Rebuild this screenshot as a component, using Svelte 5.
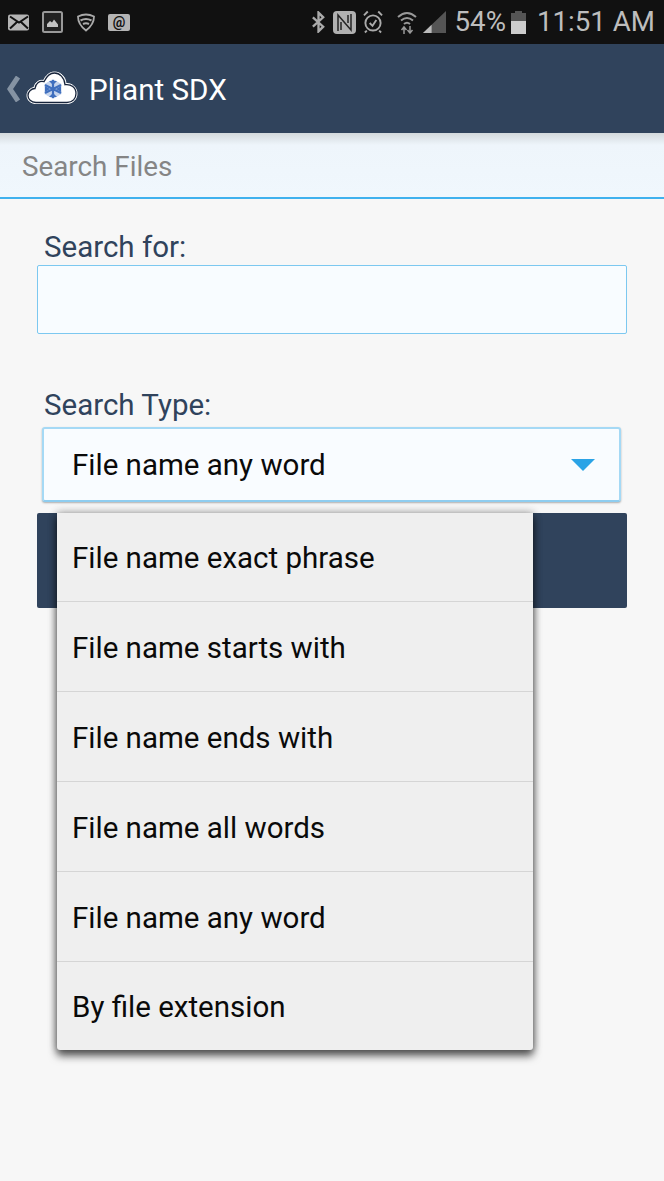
<script>
	let options = [
		'File name exact phrase',
		'File name starts with',
		'File name ends with',
		'File name all words',
		'File name any word',
		'By file extension'
	];
	let selected = 'File name any word';
	let query = '';
</script>

<main>
	<div class="status">
		<div class="status-left">
			<svg width="22" height="17" viewBox="0 0 22 17"><rect width="21" height="16" y="0.5" rx="2" fill="#b4b4b4"/><path d="M2 2.500l9 6 9-6M2 14.500l7-6.500M20 14.500l-7-6.500" fill="none" stroke="#111" stroke-width="2"/></svg>
			<svg width="21" height="22" viewBox="0 0 21 22"><rect x="1" y="1" width="19" height="20" rx="1.500" fill="#222" stroke="#999" stroke-width="2"/><path d="M5 16v-3l3-3 2 1.500 2-3 4 5v2.500z" fill="#c4c4c4"/></svg>
			<svg class="shield" width="18" height="19" viewBox="0 0 18 19"><path d="M1 3.500q8-4 16 0q0 8-8 14q-8-6-8-14z" fill="none" stroke="#aaa" stroke-width="1.800"/><path d="M3.500 7.500q5.500-3 11 0M6 11q3-1.500 6 0" fill="none" stroke="#aaa" stroke-width="2"/></svg>
			<div class="at">@</div>
		</div>
		<div class="status-right">
			<svg class="bt" width="15" height="22" viewBox="0 0 16 22"><path d="M2 6l11 10-5 5V1l5 5L2 16" fill="none" stroke="#aaa" stroke-width="2.500"/></svg>
			<svg class="nfc" width="23" height="23" viewBox="0 0 23 23"><rect width="23" height="23" rx="4" fill="#b0b0b0"/><path d="M5 20V4l13 15V3" fill="none" stroke="#222" stroke-width="1.500"/><path d="M8 11v8M15 4v8" fill="none" stroke="#222" stroke-width="1.500"/></svg>
			<svg class="alarm" width="20" height="24" viewBox="0 0 21 24"><circle cx="10.500" cy="13" r="8" fill="none" stroke="#aaa" stroke-width="2"/><path d="M7 13l3 3 4-6M1 5l4-4M20 5l-4-4M4 21l-2 2M17 21l2 2" fill="none" stroke="#aaa" stroke-width="2"/></svg>
			<svg class="wifi" width="20" height="24" viewBox="0 0 20 24"><path d="M1 7q9-8 18 0M4 10.500q6-5 12 0M7 14q3-2.500 6 0" fill="none" stroke="#999" stroke-width="2"/><path d="M7 24v-6M4.500 20l2.500-3 2.500 3M13 16v6M10.500 20l2.500 3 2.500-3" fill="none" stroke="#999" stroke-width="1.500"/></svg>
			<svg class="signal" width="23" height="22" viewBox="0 0 24 23"><path d="M0 23L24 0v23z" fill="#555"/><path d="M0 23l9-8.600V23z" fill="#bbb"/></svg>
			<span class="pct">54%</span>
			<svg class="battery" width="15" height="23" viewBox="0 0 15 23"><path d="M4 0h7v2h4v21H0V2h4z" fill="#555"/><rect y="10" width="15" height="13" fill="#ccc"/></svg>
			<span class="clock">11:51 AM</span>
		</div>
	</div>

	<header class="navbar">
		<svg class="back" width="14" height="26" viewBox="0 0 14 26"><path d="M11 1L3 13l8 12" fill="none" stroke="#8593a3" stroke-width="5"/></svg>
		<svg class="logo" width="52" height="34" viewBox="0 0 52 34">
			<path d="M10 32.500C4 32.500 1 28.500 1 24.500c0-4.500 3.500-7.500 7-8 1-5 5-8 9.500-7C20 4 24 1 28.500 1c6 0 11 4.500 11.500 11.500 6-.5 11 4 11 10 0 5.500-4 10-10 10z" fill="#fff" stroke="#fff" stroke-width="1"/>
			<path d="M10 31.500C5 31.500 2 28 2 24.500c0-4 3.500-7 7-7 .5-5 4.500-8 9-6.800C20.500 5.500 24.500 2 28.500 2c5 0 10 4.500 10.500 11.700 6-1 11 3 11 8.800 0 5-3.500 9-9 9z" fill="#fff" stroke="#16233a" stroke-width="1.300"/>
			<path d="M27 8l8.500 5v10L27 28l-8.500-5V13z" fill="#c5d4ec"/>
			<path d="M27 9v18M19 22l16-8M19 14l16 8" fill="none" stroke="#3f6fbe" stroke-width="2.200"/>
			<path d="M19 15l5 3-5 3zM35 15l-5 3 5 3zM23 10h8l-4 4zM23 26h8l-4-4z" fill="#3f6fbe"/>
		</svg>
		<h1>Pliant SDX</h1>
	</header>

	<div class="subheader">Search Files</div>

	<form class="form" on:submit|preventDefault>
		<label class="field-label" for="search-for">Search for:</label>
		<input id="search-for" class="search-input" type="text" bind:value={query} />

		<div class="field-label type-label">Search Type:</div>
		<div class="select">
			<span>{selected}</span>
			<span class="arrow"></span>
		</div>

		<div class="button-wrap">
			<button class="search-button" type="submit" aria-label="Search"></button>
			<ul class="menu">
				{#each options as option}
					<li>{option}</li>
				{/each}
			</ul>
		</div>
	</form>
</main>

<style>
:global(body) {
	background: #f7f7f7;
}
main {
	min-height: 1181px;
	background: #f7f7f7;
	font-family: Roboto, sans-serif;
}
.status {
	height: 44px;
	background: #111;
	display: flex;
	justify-content: space-between;
	align-items: center;
	padding: 0 9px 0 8px;
	box-sizing: border-box;
}
.status-left {
	display: flex;
	align-items: center;
	gap: 12px;
}
.shield {
	margin-left: 2px;
}
.at {
	margin-left: 1px;
	width: 22px;
	height: 17px;
	background: #b4b4b4;
	border-radius: 2px;
	color: #111;
	font-size: 14px;
	font-weight: 700;
	line-height: 17px;
	text-align: center;
}
.status-right {
	display: flex;
	align-items: center;
	color: #bdbdbd;
}
.nfc {
	margin-left: 7px;
}
.alarm {
	margin-left: 7px;
}
.wifi {
	margin-left: 14px;
}
.signal {
	margin-left: 6px;
}
.pct {
	margin-left: 9px;
}
.battery {
	margin-left: 5px;
}
.pct,
.clock {
	font-size: 27.7px;
	line-height: 44px;
}
.clock {
	margin-left: 11px;
}
.navbar {
	height: 89px;
	background: #30435c;
	display: flex;
	align-items: center;
	padding: 2px 0 0 7px;
	box-sizing: border-box;
}
.back {
	margin-top: -2px;
}
.logo {
	margin-left: 5px;
	margin-top: -4px;
}
h1 {
	margin: 0 0 0 11px;
	font-size: 29.6px;
	font-weight: 400;
	color: #fff;
}
.subheader {
	height: 66px;
	box-sizing: border-box;
	padding: 18px 0 0 22px;
	font-size: 27.8px;
	line-height: 32px;
	color: #858585;
	background: linear-gradient(#d3d9dc, #eef5fb 12px, #f0f7fd);
	border-bottom: 2px solid #3fb1ee;
}
.form {
	display: flex;
	flex-direction: column;
	padding: 0 37px;
}
.field-label {
	display: block;
	margin: 30px 0 0 7px;
	height: 36px;
	font-size: 29.5px;
	line-height: 36px;
	color: #30435c;
}
.search-input {
	height: 69px;
	box-sizing: border-box;
	background: #f8fcff;
	border: 1px solid #7cc8f0;
	border-radius: 2px;
	outline: none;
	font: inherit;
}
.type-label {
	margin-top: 52px;
	height: 41px;
	padding-top: 1px;
	box-sizing: border-box;
}
.select {
	margin: 0 6px 0 5px;
	height: 75px;
	box-sizing: border-box;
	padding: 0 37px 0 28px;
	display: flex;
	justify-content: space-between;
	align-items: center;
	background: #f9fcff;
	border: 2px solid #a5d9f5;
	border-bottom-color: #8ecdf0;
	border-radius: 3px;
	box-shadow: 0 1px 2px rgba(0, 0, 0, 0.3);
	font-size: 29.5px;
	color: #0a0a0a;
}
.select .arrow {
	margin-right: -13px;
	width: 0;
	height: 0;
	border-left: 12px solid transparent;
	border-right: 12px solid transparent;
	border-top: 12px solid #2ba3e6;
}
.button-wrap {
	position: relative;
	margin-top: 11px;
}
.search-button {
	display: block;
	width: 100%;
	height: 95px;
	background: #30435c;
	border: 0;
	border-radius: 2px;
}
.menu {
	position: absolute;
	top: 0;
	left: 20px;
	width: 476px;
	margin: 0;
	padding: 0;
	list-style: none;
	background: #efefef;
	border-radius: 0 0 3px 3px;
	box-shadow: 0 -2px 8px rgba(0, 0, 0, 0.15), 0 6px 9px rgba(0, 0, 0, 0.55), 0 2px 9px rgba(0, 0, 0, 0.35);
}
.menu li {
	height: 90px;
	box-sizing: border-box;
	padding: 2px 15px 0;
	display: flex;
	align-items: center;
	font-size: 29.5px;
	color: #0a0a0a;
	border-bottom: 1px solid #d5d5d5;
}
.menu li:first-child {
	height: 89px;
}
.menu li:last-child {
	height: 88px;
	border-bottom: 0;
}
</style>
